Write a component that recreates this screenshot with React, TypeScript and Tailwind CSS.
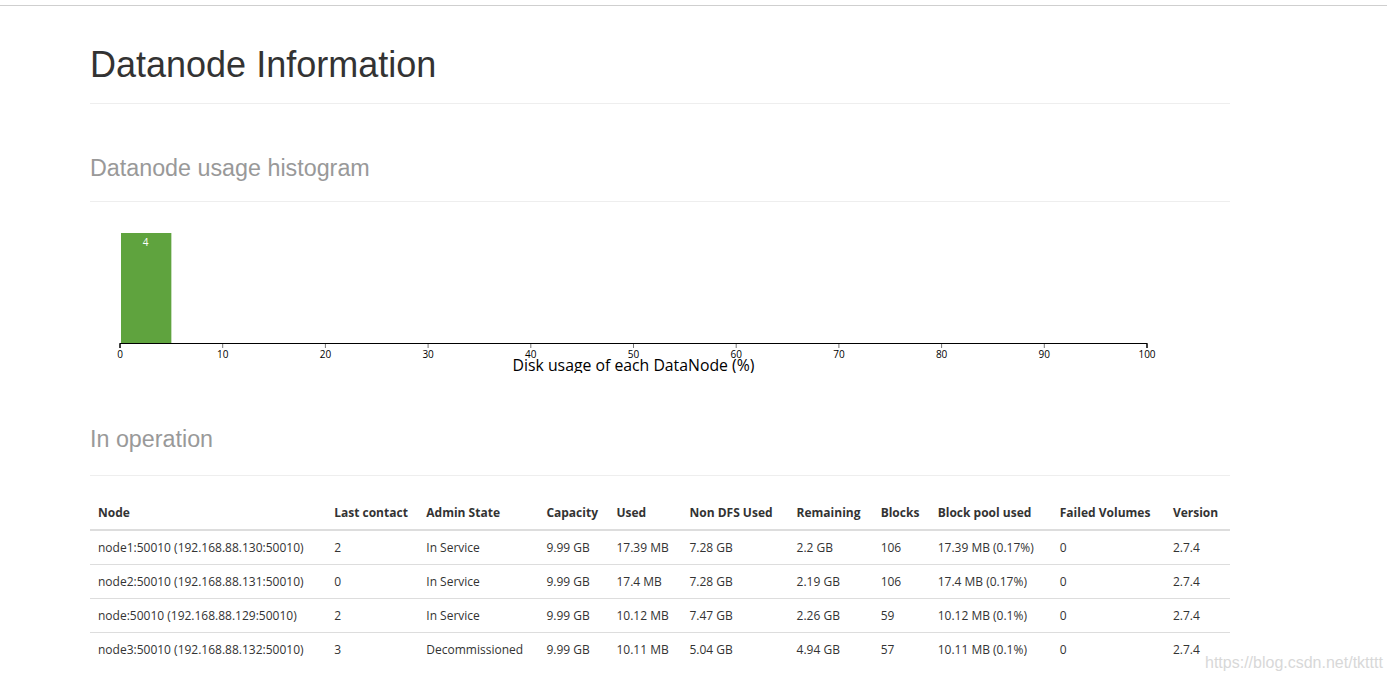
const rows = [
  ['node1:50010 (192.168.88.130:50010)', '2', 'In Service', '9.99 GB', '17.39 MB', '7.28 GB', '2.2 GB', '106', '17.39 MB (0.17%)', '0', '2.7.4'],
  ['node2:50010 (192.168.88.131:50010)', '0', 'In Service', '9.99 GB', '17.4 MB', '7.28 GB', '2.19 GB', '106', '17.4 MB (0.17%)', '0', '2.7.4'],
  ['node:50010 (192.168.88.129:50010)', '2', 'In Service', '9.99 GB', '10.12 MB', '7.47 GB', '2.26 GB', '59', '10.12 MB (0.1%)', '0', '2.7.4'],
  ['node3:50010 (192.168.88.132:50010)', '3', 'Decommissioned', '9.99 GB', '10.11 MB', '5.04 GB', '4.94 GB', '57', '10.11 MB (0.1%)', '0', '2.7.4'],
];

const headers = ['Node', 'Last contact', 'Admin State', 'Capacity', 'Used', 'Non DFS Used', 'Remaining', 'Blocks', 'Block pool used', 'Failed Volumes', 'Version'];
const widths = [236, 92, 120, 70, 73, 107, 84, 57, 122, 113, 65];

function Histogram() {
  const x0 = 30;
  const unit = 10.27;
  const ticks = [0, 10, 20, 30, 40, 50, 60, 70, 80, 90, 100];
  return (
    <svg width={1140} height={150} className="block" style={{ fontFamily: '"Open Sans", sans-serif' }}>
      <rect x={x0 + 1} y={10} width={5 * unit - 1} height={110} fill="#5fa33e" />
      <text x={x0 + 2.5 * unit} y={23} textAnchor="middle" fill="#fff" fontSize={10}>4</text>
      <g transform={`translate(${x0},120)`}>
        {ticks.map((t) => (
          <g key={t} transform={`translate(${t * unit},0)`}>
            <line y2={5} stroke={t === 0 || t === 100 ? '#000' : '#777'} strokeWidth={1} />
            <text y={15} textAnchor="middle" fontSize={10} fill="#000">{t}</text>
          </g>
        ))}
        <path d={`M0,5V0.5H${100 * unit}V5`} fill="none" stroke="#000" strokeWidth={1} />
      </g>
      <text x={x0 + 50 * unit} y={148} textAnchor="middle" fontSize={15.8} fill="#000">Disk usage of each DataNode (%)</text>
    </svg>
  );
}

export default function App() {
  return (
    <div className="min-h-[679px] bg-white relative" style={{ fontFamily: '"Liberation Sans", Arial, sans-serif' }}>
      <div className="h-[6px] border-b border-[#cfcfcf]" />
      <div className="w-[1140px] ml-[90px]">
        <div className="pt-[39px] pb-[18px] border-b border-[#eee]">
          <h1 className="text-[36px] leading-[1.1] text-[#333]">Datanode Information</h1>
        </div>
        <div className="mt-[52px] pb-[20px] border-b border-[#eee]">
          <h3 className="text-[23.3px] leading-[1.1] text-[#999]">Datanode usage histogram</h3>
        </div>
        <div className="mt-[21px]">
          <Histogram />
        </div>
        <div className="mt-[54px] pb-[22px] border-b border-[#eee]">
          <h3 className="text-[23.3px] leading-[1.1] text-[#999]">In operation</h3>
        </div>
        <table
          className="mt-[20px] w-[1140px] table-fixed border-collapse text-[12px] leading-[17px] text-[#333]"
          style={{ fontFamily: '"Open Sans", sans-serif' }}
        >
          <colgroup>
            {widths.map((w, i) => (
              <col key={i} style={{ width: w }} />
            ))}
          </colgroup>
          <thead>
            <tr>
              {headers.map((h) => (
                <th key={h} className="p-2 text-left font-bold border-b-2 border-[#ddd] whitespace-nowrap">{h}</th>
              ))}
            </tr>
          </thead>
          <tbody>
            {rows.map((r, i) => (
              <tr key={i}>
                {r.map((c, j) => (
                  <td key={j} className={`p-2 whitespace-nowrap ${i > 0 ? 'border-t border-[#ddd]' : ''}`}>{c}</td>
                ))}
              </tr>
            ))}
          </tbody>
        </table>
      </div>
      <div className="absolute left-[1205px] top-[651px] text-[16px] text-[#d8d8d8]" style={{ fontFamily: '"Liberation Sans", Arial, sans-serif' }}>
        https://blog.csdn.net/tktttt
      </div>
    </div>
  );
}
